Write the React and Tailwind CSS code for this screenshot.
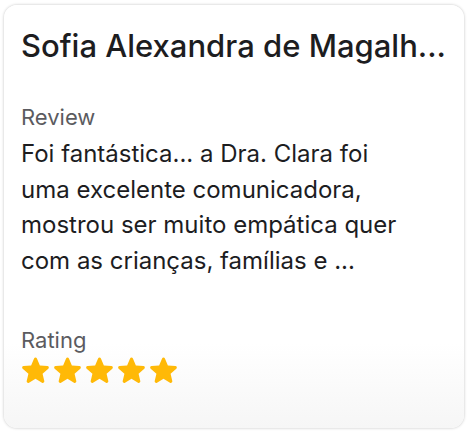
import React from "react";

function Star() {
  return (
    <svg width="29" height="29" viewBox="2.7 2.6 18.6 18.6" className="block">
      <path
        fill="#FFB907"
        d="M12 17.27l4.15 2.51c.76.46 1.69-.22 1.49-1.08l-1.1-4.72 3.67-3.18c.67-.58.31-1.68-.57-1.75l-4.83-.41-1.89-4.46c-.34-.81-1.5-.81-1.84 0L9.19 8.63l-4.83.41c-.88.07-1.24 1.17-.57 1.75l3.67 3.18-1.1 4.72c-.2.86.73 1.54 1.49 1.08L12 17.27z"
      />
    </svg>
  );
}

export default function App() {
  return (
    <div
      className="w-[472px] h-[434px] bg-white pt-[5px] pl-[4px]"
      style={{ fontFamily: "Inter, 'Noto Sans', sans-serif" }}
    >
      <div className="w-[460px] h-[423px] rounded-[13px] bg-gradient-to-b from-white from-80% to-[#f6f6f6] shadow-[0_0_3px_rgba(0,0,0,0.25)] px-[17px] pt-[23px]">
        <div className="text-[31px] font-medium text-[#1d1d1f] whitespace-nowrap leading-[36px]">
          Sofia Alexandra de Magalh...
        </div>
        <div className="mt-[40px] text-[22px] text-[#5b5b60] leading-[26px]">Review</div>
        <div className="text-[24px] text-[#1d1d1f] leading-[35.5px] mt-[6px]">
          Foi fantástica... a Dra. Clara foi
          <br />
          uma excelente comunicadora,
          <br />
          mostrou ser muito empática quer
          <br />
          com as crianças, famílias e ...
        </div>
        <div className="mt-[49px] text-[22px] text-[#5b5b60] leading-[26px]">Rating</div>
        <div className="flex gap-[3px] mt-[3px]">
          <Star />
          <Star />
          <Star />
          <Star />
          <Star />
        </div>
      </div>
    </div>
  );
}
